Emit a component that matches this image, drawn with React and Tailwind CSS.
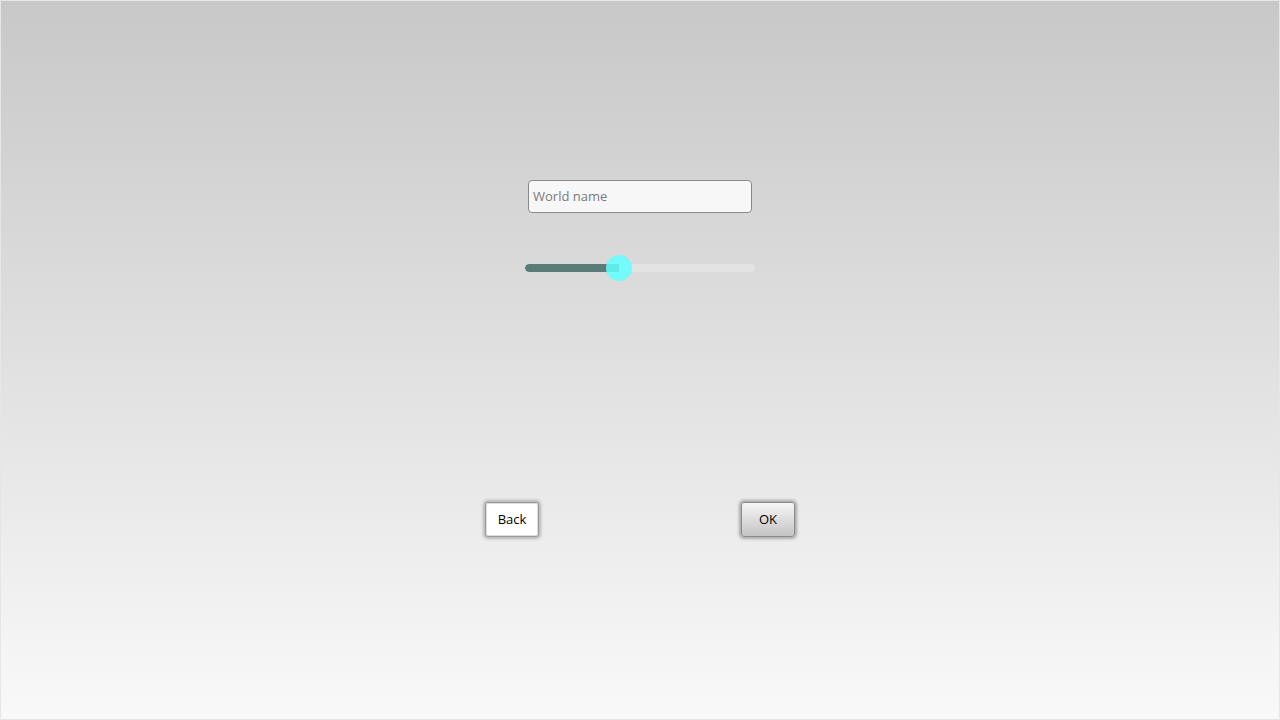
export default function App() {
  return (
    <div
      className="w-[1280px] h-[720px] border border-[#e6e6e6] flex flex-col items-center bg-gradient-to-b from-[#c8c8c8] to-[#f9f9f9]"
      style={{ fontFamily: '"Open Sans", "Noto Sans", sans-serif' }}
    >
      <div className="mt-[179px] w-[224px] h-[33px] rounded-[4px] border border-[#8a8a8a] bg-[#f7f7f7] flex items-center px-[4px] text-[13px] text-[#7a7a7a]">
        World name
      </div>
      <div className="mt-[42px] w-[230px] h-[26px] relative flex items-center">
        <div className="w-full h-[8px] rounded-full bg-[#e3e3e3] overflow-hidden">
          <div className="h-full w-[94px] bg-[#5a7b77] rounded-l-full" />
        </div>
        <div className="absolute left-[81px] top-0 w-[26px] h-[26px] rounded-full bg-[#62ffff] opacity-[0.85]" />
      </div>
      <div className="mt-[221px] w-[310px] flex justify-between">
        <button className="w-[54px] h-[35px] rounded-[3px] border border-[#9a9a9a] bg-white shadow-[0_0_3px_2px_rgba(0,0,0,0.22),inset_0_0_0_1px_#ddd] text-[13px] text-black">
          Back
        </button>
        <button className="w-[54px] h-[35px] rounded-[3px] border border-[#8a8a8a] bg-gradient-to-b from-[#f6f6f6] to-[#c4c4c4] shadow-[0_0_3px_2px_rgba(0,0,0,0.28)] text-[13px] text-black">
          OK
        </button>
      </div>
    </div>
  );
}
